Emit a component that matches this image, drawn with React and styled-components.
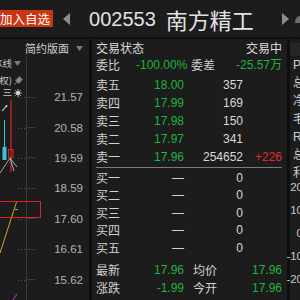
import React from "react";
import styled, { createGlobalStyle } from "styled-components";

const GlobalStyle = createGlobalStyle`
  html, body {
    margin: 0;
    padding: 0;
    background: #1c1c1c;
  }
`;

const GREEN = "#1fb43c";
const RED = "#e8262a";

const Screen = styled.div`
  width: 300px;
  height: 300px;
  overflow: hidden;
  display: flex;
  flex-direction: column;
  background: #1c1c1c;
  color: #d6d6d6;
  font-family: "Liberation Sans", "Noto Sans CJK SC", sans-serif;
`;

const TopBar = styled.header`
  flex: none;
  height: 37px;
  display: flex;
  align-items: center;
  border-bottom: 2px solid #0e0e0e;
  & > * {
    flex: none;
  }
`;

const AddButton = styled.button`
  margin-left: -3px;
  height: 17px;
  padding: 0 3px;
  border: none;
  background: #cc3512;
  color: #fff;
  font-family: "Noto Sans CJK SC", sans-serif;
  font-size: 12.5px;
  line-height: 17px;
  white-space: nowrap;
`;

const NavArrow = styled.svg`
  margin-left: ${(p) => p.$gap}px;
  width: 7px;
  height: 12px;
`;

const Code = styled.span`
  margin-left: 19px;
  font-size: 20px;
  color: #e2e2e2;
  line-height: 1;
`;

const Name = styled.span`
  margin-left: 10px;
  font-family: "Noto Sans CJK SC", sans-serif;
  font-size: 22px;
  color: #e2e2e2;
  line-height: 1;
`;

const Body = styled.div`
  flex: 1;
  min-height: 0;
  display: flex;
  overflow: hidden;
`;

/* ---------- chart column ---------- */

const ChartPanel = styled.section`
  flex: none;
  width: 89px;
  display: flex;
  flex-direction: column;
  border-right: 3px solid #0e0e0e;
`;

const PanelHead = styled.div`
  flex: none;
  height: 18px;
  display: flex;
  align-items: center;
  justify-content: flex-end;
  gap: 7px;
  padding-right: 6px;
  font-family: "Noto Sans CJK SC", sans-serif;
  font-size: 11px;
  color: #cfcfcf;
`;

const ChartBody = styled.div`
  position: relative;
  flex: 1;
  display: grid;
  grid-template-columns: 26px 1fr;
`;

const Plot = styled.div`
  position: relative;
  overflow: hidden;
  & > svg {
    display: block;
  }
`;

const MiniTools = styled.div`
  position: absolute;
  top: 0;
  left: 0;
  width: 26px;
  display: flex;
  flex-direction: column;
`;

const ToolRow = styled.div`
  height: 11px;
  margin-top: ${(p) => p.$top || 0}px;
  display: grid;
  grid-template-columns: 12px 10px;
  gap: 2px;
  align-items: center;
`;

const ToolText = styled.span`
  display: flex;
  justify-content: flex-end;
  overflow: hidden;
  height: 11px;
  font-family: "Noto Sans CJK SC", sans-serif;
  font-size: 9.5px;
  line-height: 11px;
  color: #c8c8c8;
  & > span {
    flex: none;
    white-space: nowrap;
  }
`;

const Axis = styled.div`
  border-left: 1px solid #3a3a3a;
  padding-top: 25px;
  display: flex;
  flex-direction: column;
`;

const AxisRow = styled.div`
  height: 30.4px;
  flex: none;
  display: flex;
  align-items: center;
`;

const Tick = styled.i`
  width: 8px;
  height: 1px;
  background: #3c3c3c;
`;

const AxisLabel = styled.span`
  flex: 1;
  text-align: right;
  padding-right: 6px;
  font-size: 11.5px;
  color: #b2b2b2;
`;

const Marker = styled.div`
  position: absolute;
  left: -2px;
  top: 144px;
  width: 41px;
  height: 15px;
  border: 1.5px solid #e02424;
`;

/* ---------- order book ---------- */

const OrderPanel = styled.section`
  flex: none;
  width: 186px;
  padding: 0 5px 0 4px;
  display: flex;
  flex-direction: column;
  border-right: 3px solid #0e0e0e;
  font-size: 12px;
`;

const StatusRow = styled.div`
  height: 17px;
  display: flex;
  align-items: center;
  justify-content: space-between;
  font-family: "Noto Sans CJK SC", sans-serif;
  color: #dcdcdc;
  line-height: 1;
`;

const PairRow = styled.div`
  flex: none;
  height: 18px;
  display: grid;
  grid-template-columns: 40px 48px 1fr;
  align-items: center;
  line-height: 1;
`;

const Pair = styled.div`
  display: flex;
  justify-content: space-between;
  padding-left: ${(p) => p.$pad}px;
`;

const Label = styled.span`
  font-family: "Noto Sans CJK SC", sans-serif;
  color: #d2d2d2;
`;

const Num = styled.span`
  text-align: right;
  color: ${(p) => p.$c || "#d8d8d8"};
`;

const BookRow = styled.div`
  flex: none;
  height: ${(p) => p.$h}px;
  display: grid;
  grid-template-columns: 40px 48px 59px 39px;
  align-items: center;
  line-height: 1;
`;

const Divider = styled.hr`
  flex: none;
  margin: ${(p) => p.$m};
  border: none;
  height: 1px;
  background: ${(p) => p.$c};
`;

/* ---------- right strip ---------- */

const SidePanel = styled.section`
  flex: none;
  width: 20px;
  display: flex;
  flex-direction: column;
  font-size: 12px;
  line-height: 1;
  color: #cfcfcf;
`;

const SideHead = styled.div`
  margin-top: 4px;
  height: 13px;
  background: #262626;
`;

const SideItem = styled.div`
  height: 18px;
  display: flex;
  align-items: center;
  padding-left: 3px;
`;

const SideScale = styled.div`
  margin-top: -6px;
  display: flex;
  flex-direction: column;
`;

const ScaleItem = styled.div`
  height: 23px;
  display: flex;
  align-items: center;
  justify-content: flex-end;
  padding-right: 7px;
  font-size: 11.5px;
  color: #c8c8c8;
`;

const prices = ["21.57", "20.58", "19.59", "18.59", "17.60", "16.61", "15.62"];

const sells = [
  ["卖五", "18.00", "357", ""],
  ["卖四", "17.99", "169", ""],
  ["卖三", "17.98", "150", ""],
  ["卖二", "17.97", "341", ""],
  ["卖一", "17.96", "254652", "+226"],
];

const buys = ["买一", "买二", "买三", "买四", "买五"];

const sideItems = ["P", "总", "净", "毛", "R", "总", "利"];
const scale = ["20", "10", "0", "-10", "-20"];

function PlotDrawing() {
  const grid = [40, 71, 101, 131, 162, 192, 223];
  return (
    <svg width="26" height="243" viewBox="0 0 26 243">
      {grid.map((y) => (
        <line key={y} x1="18" x2="26" y1={y + 0.5} y2={y + 0.5} stroke="#555" strokeDasharray="1 2" />
      ))}
      <line x1="2" y1="54" x2="6.5" y2="49" stroke="#9aa6b8" strokeWidth="1.3" />
      <circle cx="6.5" cy="49" r="1" fill="#c8d0dc" />
      <line x1="11" y1="43" x2="11" y2="115" stroke="#e02424" strokeWidth="1.2" />
      <rect x="8.5" y="92.5" width="4.5" height="8" fill="none" stroke="#e02424" strokeWidth="1" />
      <line x1="4.5" y1="63" x2="4.5" y2="91" stroke="#37c6cf" strokeWidth="1" />
      <rect x="2.5" y="90" width="4" height="13" fill="#37c6cf" />
      <polyline points="0,116 10,101 14,114" fill="none" stroke="#b8b8b8" strokeWidth="0.9" />
      <polyline points="10,101 17,110" fill="none" stroke="#b8b8b8" strokeWidth="0.9" />
      <line x1="0" y1="196" x2="16.5" y2="145" stroke="#d4a428" strokeWidth="1" />
      <line x1="15" y1="152.5" x2="18" y2="152.5" stroke="#37c6cf" strokeWidth="1" />
      <line x1="13" y1="243" x2="17" y2="237" stroke="#c03cc0" strokeWidth="1" />
    </svg>
  );
}

export default function App() {
  return (
    <>
      <GlobalStyle />
      <Screen>
        <TopBar>
          <AddButton>加入自选</AddButton>
          <NavArrow $gap={10} viewBox="0 0 7 12">
            <path d="M7 0 L0 6 L7 12 Z" fill="#8e8e8e" />
          </NavArrow>
          <Code>002553</Code>
          <Name>南方精工</Name>
          <NavArrow $gap={28} viewBox="0 0 7 12">
            <path d="M0 0 L7 6 L0 12 Z" fill="#8e8e8e" />
          </NavArrow>
          <NavArrow $gap={5} viewBox="0 0 7 12">
            <path d="M1 10 C1 6 3 3 6 3 L7 3 L7 10 Z" fill="#6c6c6c" />
          </NavArrow>
        </TopBar>

        <Body>
          <ChartPanel>
            <PanelHead>
              <span>简约版面</span>
              <svg width="7" height="5" viewBox="0 0 7 5">
                <path d="M0 0 H7 L3.5 5 Z" fill="#7a7a7a" />
              </svg>
            </PanelHead>
            <ChartBody>
              <Plot>
                <PlotDrawing />
                <MiniTools>
                  <ToolRow $top={1}>
                    <ToolText>
                      <span>K线</span>
                    </ToolText>
                    <svg width="7" height="5" viewBox="0 0 7 5">
                      <path d="M0 0 H7 L3.5 5 Z" fill="#7a7a7a" />
                    </svg>
                  </ToolRow>
                  <ToolRow $top={6}>
                    <ToolText>
                      <span>复权)</span>
                    </ToolText>
                    <svg width="9" height="9" viewBox="0 0 9 9">
                      <path d="M5 0 L9 4 L7.5 4.5 L5.5 7 L5 8 L1 4 L2 3.5 L4.5 1.5 Z" fill="#8a8a8a" />
                      <line x1="3" y1="6" x2="0.5" y2="8.5" stroke="#8a8a8a" strokeWidth="1" />
                    </svg>
                  </ToolRow>
                  <ToolRow $top={1}>
                    <ToolText>
                      <span>三</span>
                    </ToolText>
                    <svg width="8" height="8" viewBox="0 0 8 8">
                      <circle cx="4" cy="4" r="2" fill="#d8d8d8" />
                      <path d="M4 0 V8 M0 4 H8 M1.2 1.2 L6.8 6.8 M6.8 1.2 L1.2 6.8" stroke="#d8d8d8" strokeWidth="0.8" />
                    </svg>
                  </ToolRow>
                </MiniTools>
              </Plot>
              <Axis>
                {prices.map((p) => (
                  <AxisRow key={p}>
                    <Tick />
                    <AxisLabel>{p}</AxisLabel>
                  </AxisRow>
                ))}
              </Axis>
              <Marker />
            </ChartBody>
          </ChartPanel>

          <OrderPanel>
            <StatusRow>
              <span>交易状态</span>
              <span>交易中</span>
            </StatusRow>
            <PairRow>
              <Label>委比</Label>
              <Num $c={GREEN}>-100.00%</Num>
              <Pair $pad={7}>
                <Label>委差</Label>
                <Num $c={GREEN}>-25.57万</Num>
              </Pair>
            </PairRow>
            <Divider $m="0 0 1px" $c="#1c1c1c" />
            {sells.map(([l, p, v, c]) => (
              <BookRow key={l} $h={18}>
                <Label>{l}</Label>
                <Num $c={GREEN}>{p}</Num>
                <Num>{v}</Num>
                <Num $c={RED}>{c}</Num>
              </BookRow>
            ))}
            <Divider $m="1px 0" $c="#7a7a7a" />
            {buys.map((l) => (
              <BookRow key={l} $h={17.5}>
                <Label>{l}</Label>
                <Num $c="#cfcfcf">—</Num>
                <Num>0</Num>
                <Num />
              </BookRow>
            ))}
            <Divider $m="2px 0 1.5px" $c="#1c1c1c" />
            <PairRow>
              <Label>最新</Label>
              <Num $c={GREEN}>17.96</Num>
              <Pair $pad={9}>
                <Label>均价</Label>
                <Num $c={GREEN}>17.96</Num>
              </Pair>
            </PairRow>
            <PairRow>
              <Label>涨跌</Label>
              <Num $c={GREEN}>-1.99</Num>
              <Pair $pad={9}>
                <Label>今开</Label>
                <Num $c={GREEN}>17.96</Num>
              </Pair>
            </PairRow>
          </OrderPanel>

          <SidePanel>
            <SideHead />
            {sideItems.map((s, i) => (
              <SideItem key={i}>{s}</SideItem>
            ))}
            <SideScale>
              {scale.map((s) => (
                <ScaleItem key={s}>{s}</ScaleItem>
              ))}
            </SideScale>
          </SidePanel>
        </Body>
      </Screen>
    </>
  );
}
